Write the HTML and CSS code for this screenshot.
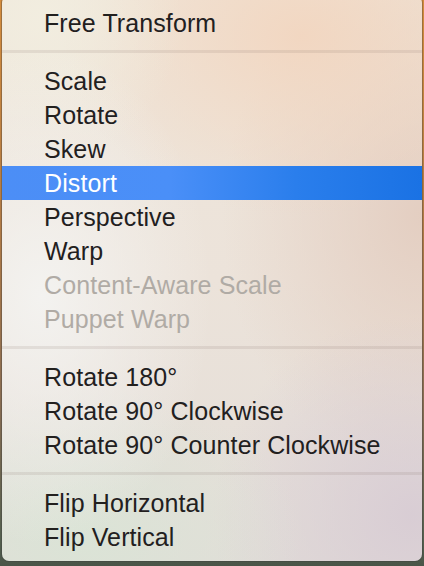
FILE: index.html
```html
<!DOCTYPE html>
<html>
<head>
<meta charset="utf-8">
<link rel="stylesheet" href="styles.css">
</head>
<body>
<div class="menu">
  <div class="item">Free Transform</div>
  <div class="sep"></div>
  <div class="item">Scale</div>
  <div class="item">Rotate</div>
  <div class="item">Skew</div>
  <div class="item active">Distort</div>
  <div class="item">Perspective</div>
  <div class="item">Warp</div>
  <div class="item disabled">Content-Aware Scale</div>
  <div class="item disabled">Puppet Warp</div>
  <div class="sep"></div>
  <div class="item">Rotate 180°</div>
  <div class="item">Rotate 90° Clockwise</div>
  <div class="item">Rotate 90° Counter Clockwise</div>
  <div class="sep"></div>
  <div class="item">Flip Horizontal</div>
  <div class="item">Flip Vertical</div>
</div>
</body>
</html>
```
FILE: styles.css
```css
html, body {
  margin: 0;
  padding: 0;
  height: 566px;
  overflow: hidden;
}
body {
  background: linear-gradient(180deg, #d48c3c 0%, #b07a45 40%, #8a6d52 70%, #55604f 95%, #4a5548 100%);
  font-family: "Liberation Sans", Arial, sans-serif;
}
.menu {
  margin: -4px 2px 0 2px;
  padding: 10px 0 7px 0;
  border-radius: 7px;
  box-shadow: 0 0 0 1px rgba(60, 60, 60, 0.35);
  background:
    radial-gradient(ellipse 170px 250px at 40px 300px, rgba(244, 244, 242, 0.9), rgba(244, 244, 242, 0) 100%),
    radial-gradient(ellipse 140px 150px at 40px 20px, rgba(242, 238, 224, 0.9), rgba(242, 238, 224, 0) 100%),
    radial-gradient(ellipse 240px 180px at 300px 40px, rgba(242, 214, 192, 0.95), rgba(242, 214, 192, 0) 100%),
    radial-gradient(ellipse 220px 150px at 80px 540px, rgba(218, 228, 214, 0.95), rgba(218, 228, 214, 0) 100%),
    radial-gradient(ellipse 200px 200px at 410px 520px, rgba(216, 204, 212, 0.95), rgba(216, 204, 212, 0) 100%),
    radial-gradient(ellipse 200px 260px at 420px 220px, rgba(227, 205, 192, 0.95), rgba(227, 205, 192, 0) 100%),
    linear-gradient(180deg, #efe6da 0%, #ece3da 50%, #e2ddd8 100%);
}
.item {
  height: 34px;
  line-height: 34px;
  padding-left: 42px;
  font-size: 25px;
  letter-spacing: 0.1px;
  color: #22201e;
  white-space: nowrap;
}
.item.active {
  color: #ffffff;
  background: linear-gradient(90deg, #4c8ef6 0%, #4a8ff8 40%, #2a7eec 70%, #1a72e4 100%);
}
.item.disabled {
  color: #b0aba5;
}
.sep {
  height: 3px;
  margin: 10px 0 11px 0;
  background: rgba(120, 100, 90, 0.13);
}
```
